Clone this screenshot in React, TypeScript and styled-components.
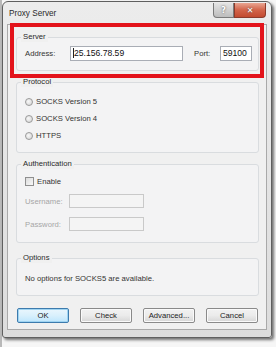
import React from "react";
import styled, { createGlobalStyle } from "styled-components";

const Global = createGlobalStyle`
  html, body { margin: 0; padding: 0; }
  body {
    background: #f6f6f6;
    font-family: "Liberation Sans", Arial, sans-serif;
    font-size: 7.7px;
    color: #1e1e1e;
  }
`;

const Page = styled.div`
  position: relative;
  width: 276px;
  height: 347px;
  overflow: hidden;
  background: linear-gradient(90deg, #b9b9b9 0, #b9b9b9 2px, #f6f6f6 2px);
`;

const Window = styled.div`
  margin: 1px 0 0 2px;
  width: 270px;
  height: 337px;
  box-sizing: border-box;
  border: 1px solid #5f5f5f;
  border-radius: 6px 6px 3px 3px;
  background: linear-gradient(#ececec, #dcdcdc);
  box-shadow: 2px 2px 3px rgba(0, 0, 0, 0.55);
  display: flex;
  flex-direction: column;
`;

const TitleBar = styled.div`
  height: 22px;
  display: flex;
  align-items: flex-start;
  padding: 0 5px 0 6px;
`;

const Title = styled.div`
  flex: 1;
  line-height: 23px;
  font-size: 8.2px;
  color: #2a2a2a;
`;

const CaptionBtn = styled.div<{ $kind: "help" | "close" }>`
  margin-top: 1px;
  height: 15px;
  width: ${(p) => (p.$kind === "help" ? "21px" : "32px")};
  box-sizing: border-box;
  border: 1px solid ${(p) => (p.$kind === "help" ? "#7a7a7a" : "#8d3b2b")};
  border-top: none;
  border-radius: ${(p) => (p.$kind === "help" ? "0 0 0 4px" : "0 0 4px 0")};
  background: ${(p) =>
    p.$kind === "help"
      ? "linear-gradient(#e4e4e4, #bdbdbd)"
      : "linear-gradient(#e9a592, #d3644a 50%, #c24a30)"};
  display: flex;
  align-items: center;
  justify-content: center;
  color: #fff;
  font-family: "DejaVu Sans", sans-serif;
  font-weight: bold;
  font-size: 8px;
  text-shadow: 0 0 2px #444;
`;

const Client = styled.div`
  margin: 0 4px;
  height: 306px;
  box-sizing: border-box;
  border: 1px solid #a9a9a9;
  background: #f0f0f0;
  padding: 12px 7px 0 8px;
  display: flex;
  flex-direction: column;
`;

const Group = styled.div<{ $h: number; $mt: number }>`
  height: ${(p) => p.$h}px;
  margin-top: ${(p) => p.$mt}px;
  box-sizing: border-box;
  border: 1px solid #d9dcdf;
  border-radius: 3px;
  background: #f3f3f4;
  display: flex;
  flex-direction: column;
`;

const Legend = styled.div`
  align-self: flex-start;
  margin: -6px 0 0 4px;
  padding: 0 2px;
  line-height: 10px;
  height: 10px;
  background: #f0f0f0;
  color: #2a2a2a;
`;

const Body = styled.div<{ $pt: number }>`
  padding: ${(p) => p.$pt}px 5px 0 8px;
  display: flex;
  flex-direction: column;
`;

const Row = styled.div<{ $h?: number; $mt?: number }>`
  display: flex;
  align-items: center;
  height: ${(p) => p.$h ?? 15}px;
  margin-top: ${(p) => p.$mt ?? 0}px;
`;

const Label = styled.span<{ $w: number; $disabled?: boolean }>`
  width: ${(p) => p.$w}px;
  flex: none;
  color: ${(p) => (p.$disabled ? "#a6a6a6" : "#333")};
`;

const TextBox = styled.div<{ $w: number; $h?: number; $disabled?: boolean }>`
  width: ${(p) => p.$w}px;
  height: ${(p) => p.$h ?? 15}px;
  box-sizing: border-box;
  border: 1px solid ${(p) => (p.$disabled ? "#c9c9c9" : "#a9adb5")};
  background: ${(p) => (p.$disabled ? "#f4f4f4" : "#ffffff")};
  font-size: 8.6px;
  line-height: 13px;
  padding-left: 2px;
  color: #111;
  overflow: hidden;
  white-space: nowrap;
`;

const Caret = styled.span`
  display: inline-block;
  width: 1px;
  height: 10px;
  background: #222;
  vertical-align: -2px;
`;

const Spacer = styled.div<{ $w: number }>`
  width: ${(p) => p.$w}px;
  flex: none;
`;

const RadioDot = styled.span`
  width: 8px;
  height: 8px;
  box-sizing: border-box;
  border-radius: 50%;
  border: 1px solid #9a9a9a;
  background: radial-gradient(circle at 40% 40%, #f7f7f7, #d2d2d2);
  margin-right: 3px;
  flex: none;
`;

const CheckBox = styled.span`
  width: 9px;
  height: 9px;
  box-sizing: border-box;
  border: 1px solid #8f8f8f;
  background: linear-gradient(135deg, #dcdcdc, #f8f8f8);
  margin-right: 3px;
  flex: none;
`;

const ItemText = styled.span`
  color: #333;
`;

const Buttons = styled.div`
  margin: 12px 0 0 1px;
  display: flex;
  gap: 11px;
`;

const Button = styled.div<{ $default?: boolean }>`
  width: 52px;
  height: 15px;
  box-sizing: border-box;
  border: 1px solid ${(p) => (p.$default ? "#3d7bad" : "#8a8a8a")};
  border-radius: 2px;
  background: ${(p) =>
    p.$default
      ? "linear-gradient(#eaf6fd, #d9f0fc 50%, #bee6fd)"
      : "linear-gradient(#f2f2f2, #ebebeb 50%, #d6d6d6)"};
  box-shadow: ${(p) => (p.$default ? "inset 0 0 0 1px #9fd4f2" : "inset 0 0 0 1px #fafafa")};
  display: flex;
  align-items: center;
  justify-content: center;
  color: #222;
  line-height: 13px;
`;

const Annotation = styled.div`
  position: absolute;
  left: 10px;
  top: 23px;
  width: 254px;
  height: 55px;
  box-sizing: border-box;
  border: 4px solid #e3131b;
  pointer-events: none;
`;

export default function App() {
  return (
    <>
      <Global />
      <Page>
        <Window>
          <TitleBar>
            <Title>Proxy Server</Title>
            <CaptionBtn $kind="help">?</CaptionBtn>
            <CaptionBtn $kind="close">✕</CaptionBtn>
          </TitleBar>
          <Client>
            <Group $h={34} $mt={0}>
              <Legend>Server</Legend>
              <Body $pt={4}>
                <Row $h={15}>
                  <Label $w={45}>Address:</Label>
                  <TextBox $w={113}>
                    <Caret />25.156.78.59
                  </TextBox>
                  <Spacer $w={11} />
                  <Label $w={26}>Port:</Label>
                  <TextBox $w={32}>59100</TextBox>
                </Row>
              </Body>
            </Group>

            <Group $h={71} $mt={11}>
              <Legend>Protocol</Legend>
              <Body $pt={6}>
                <Row $h={17}>
                  <RadioDot />
                  <ItemText>SOCKS Version 5</ItemText>
                </Row>
                <Row $h={17}>
                  <RadioDot />
                  <ItemText>SOCKS Version 4</ItemText>
                </Row>
                <Row $h={17}>
                  <RadioDot />
                  <ItemText>HTTPS</ItemText>
                </Row>
              </Body>
            </Group>

            <Group $h={79} $mt={11}>
              <Legend>Authentication</Legend>
              <Body $pt={4}>
                <Row $h={17}>
                  <CheckBox />
                  <ItemText>Enable</ItemText>
                </Row>
                <Row $h={14} $mt={4}>
                  <Label $w={44} $disabled>
                    Username:
                  </Label>
                  <TextBox $w={75} $h={14} $disabled />
                </Row>
                <Row $h={14} $mt={9}>
                  <Label $w={44} $disabled>
                    Password:
                  </Label>
                  <TextBox $w={75} $h={14} $disabled />
                </Row>
              </Body>
            </Group>

            <Group $h={38} $mt={15}>
              <Legend>Options</Legend>
              <Body $pt={10}>
                <Row $h={10}>
                  <ItemText>No options for SOCKS5 are available.</ItemText>
                </Row>
              </Body>
            </Group>

            <Buttons>
              <Button $default>OK</Button>
              <Button>Check</Button>
              <Button>Advanced...</Button>
              <Button>Cancel</Button>
            </Buttons>
          </Client>
        </Window>
        <Annotation />
      </Page>
    </>
  );
}
